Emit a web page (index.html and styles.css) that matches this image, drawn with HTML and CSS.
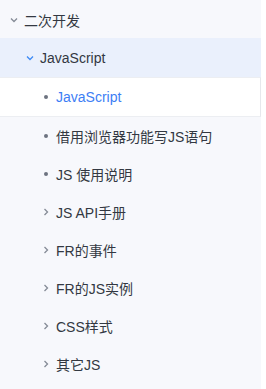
FILE: index.html
```html
<!DOCTYPE html>
<html lang="zh-CN">
<head>
    <meta charset="UTF-8">
    <title>二次开发</title>
    <link rel="stylesheet" href="styles.css">
</head>
<body>
<div class="sidebar">
    <div class="item lv1">
        <svg class="arrow" viewBox="0 0 8 8"><path d="M1 2.5 L4 5.5 L7 2.5"/></svg>
        <span>二次开发</span>
    </div>
    <div class="item lv2 open">
        <svg class="arrow" viewBox="0 0 8 8"><path d="M1 2.5 L4 5.5 L7 2.5"/></svg>
        <span>JavaScript</span>
    </div>
    <div class="item lv3 active">
        <i class="dot"></i>
        <span>JavaScript</span>
        <div class="handle"><b></b><b></b><b></b><b></b></div>
    </div>
    <div class="item lv3"><i class="dot"></i><span>借用浏览器功能写JS语句</span></div>
    <div class="item lv3"><i class="dot"></i><span>JS 使用说明</span></div>
    <div class="item lv3">
        <svg class="arrow" viewBox="0 0 8 8"><path d="M2.5 1 L5.5 4 L2.5 7"/></svg>
        <span>JS API手册</span>
    </div>
    <div class="item lv3">
        <svg class="arrow" viewBox="0 0 8 8"><path d="M2.5 1 L5.5 4 L2.5 7"/></svg>
        <span>FR的事件</span>
    </div>
    <div class="item lv3">
        <svg class="arrow" viewBox="0 0 8 8"><path d="M2.5 1 L5.5 4 L2.5 7"/></svg>
        <span>FR的JS实例</span>
    </div>
    <div class="item lv3">
        <svg class="arrow" viewBox="0 0 8 8"><path d="M2.5 1 L5.5 4 L2.5 7"/></svg>
        <span>CSS样式</span>
    </div>
    <div class="item lv3">
        <svg class="arrow" viewBox="0 0 8 8"><path d="M2.5 1 L5.5 4 L2.5 7"/></svg>
        <span>其它JS</span>
    </div>
</div>
</body>
</html>
```

FILE: styles.css
```css
body {
    margin: 0;
    background-color: #fff;
    font-family: "Liberation Sans", "Noto Sans CJK SC", sans-serif;
}
.sidebar {
    width: 261px;
    height: 389px;
    background-color: #f7f8fc;
    overflow: hidden;
}
.item {
    position: relative;
    display: flex;
    align-items: center;
    height: 38px;
    font-size: 14px;
    color: #333842;
    box-sizing: border-box;
}
.item:first-child {
    padding-top: 2px;
}
.lv1 {
    padding-left: 10px;
}
.lv2 {
    padding-left: 26px;
    height: 39px;
}
.lv3 {
    padding-left: 42px;
}
.arrow {
    width: 8px;
    height: 8px;
    margin-right: 6px;
    fill: none;
    stroke: #858b96;
    stroke-width: 1.3;
}
.open {
    background-color: #eaf0fc;
}
.open .arrow {
    stroke: #3d8af5;
}
.dot {
    width: 4px;
    height: 4px;
    border-radius: 50%;
    background-color: #6d7380;
    margin: 0 8px 0 2px;
}
.active {
    height: 40px;
    background-color: #fff;
    border-top: 1px solid #eceef2;
    border-bottom: 1px solid #eceef2;
    border-right: 1px solid #e6e8ec;
    color: #3d7ef5;
}
.handle {
    position: absolute;
    left: 262px;
    top: 7px;
    display: flex;
    flex-direction: column;
    gap: 2px;
}
.handle b {
    width: 3px;
    height: 2px;
    background-color: #b9bfcc;
}
```
